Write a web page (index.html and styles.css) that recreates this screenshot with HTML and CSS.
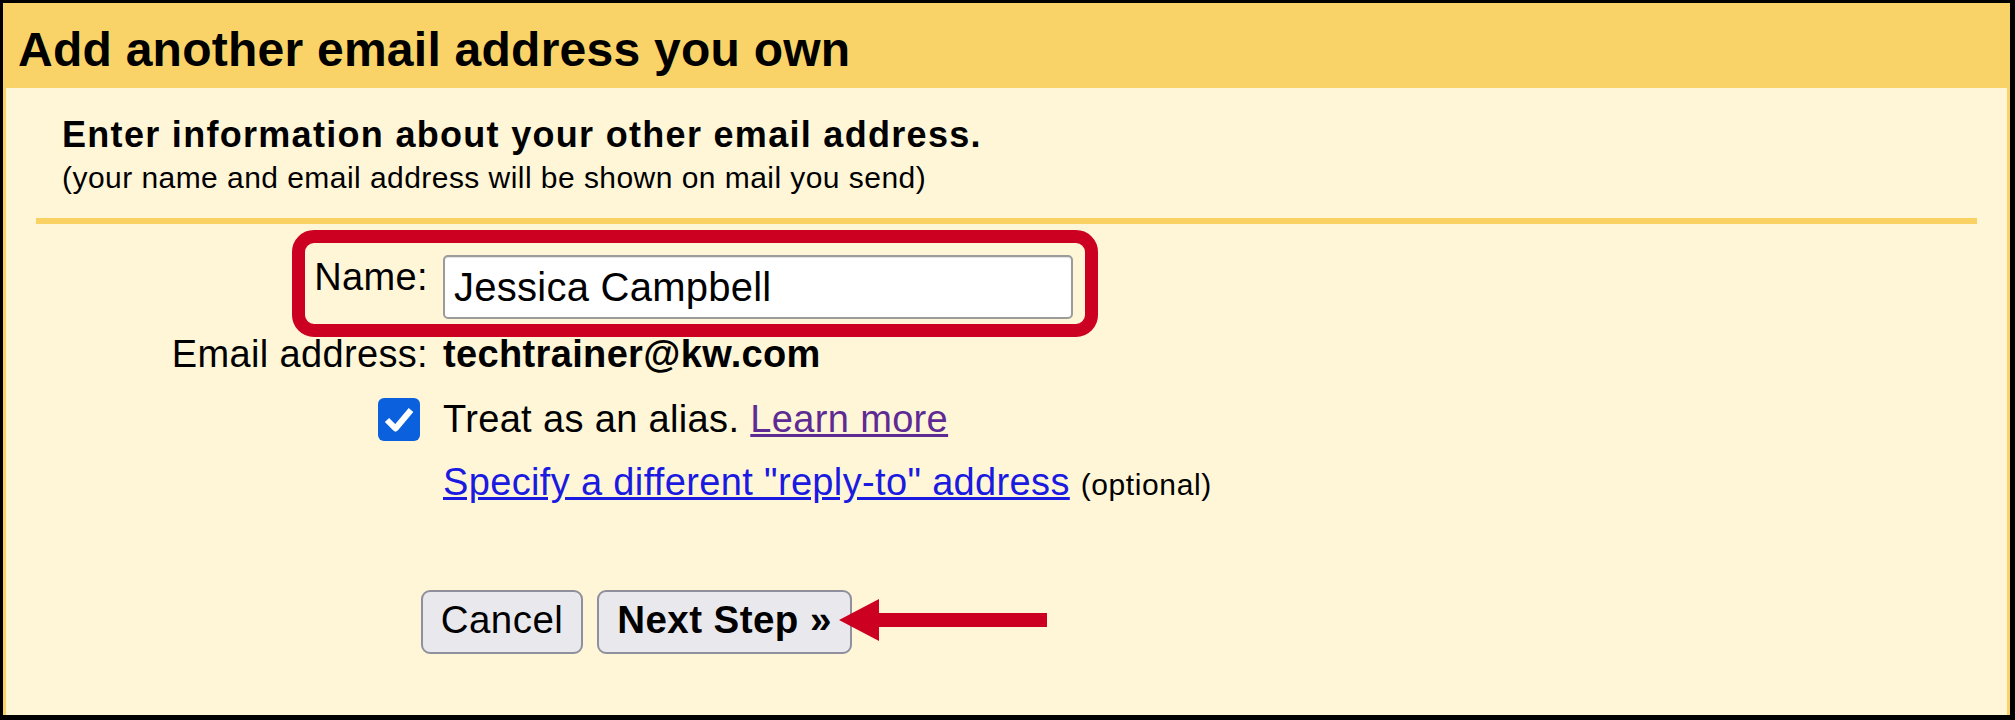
FILE: index.html
```html
<!DOCTYPE html>
<html lang="en">
<head>
<meta charset="utf-8">
<title>Add another email address you own</title>
<link rel="stylesheet" href="styles.css">
</head>
<body>
<div class="dialog">
  <div class="header">
    <h1 class="title">Add another email address you own</h1>
  </div>
  <div class="content">
    <h2 class="subtitle">Enter information about your other email address.</h2>
    <p class="note">(your name and email address will be shown on mail you send)</p>
    <div class="divider"></div>

    <div class="row row-name">
      <label class="label" for="name">Name:</label>
      <div class="value"><input id="name" class="text-input" type="text" value="Jessica Campbell"></div>
    </div>
    <div class="row row-email">
      <span class="label">Email address:</span>
      <span class="value strong">techtrainer@kw.com</span>
    </div>
    <div class="row row-alias">
      <span class="label"><span class="checkbox"><svg viewBox="0 0 42 43" width="42" height="43"><polyline points="9,22 17.5,30.5 33,12" fill="none" stroke="#fff" stroke-width="6" stroke-linejoin="round"/></svg></span></span>
      <span class="value">Treat as an alias. <a class="visited" href="#">Learn more</a></span>
    </div>
    <div class="row row-reply">
      <span class="label"></span>
      <span class="value"><a class="link" href="#">Specify a different "reply-to" address</a> <span class="optional">(optional)</span></span>
    </div>
    <div class="buttons">
      <button class="btn" type="button">Cancel</button>
      <button class="btn btn-primary" type="button">Next Step »</button>
    </div>
  </div>

  <div class="highlight"></div>
  <svg class="arrow" viewBox="0 0 208 42" width="208" height="42"><polygon points="0,21 40,0 40,14 208,14 208,28 40,28 40,42" fill="#cc0020"/></svg>
</div>
</body>
</html>
```

FILE: styles.css
```css
html, body {
  margin: 0;
  padding: 0;
  background: #ffffff;
}
body {
  font-family: "Liberation Sans", Arial, sans-serif;
  color: #000;
}
.dialog {
  position: relative;
  box-sizing: border-box;
  width: 2015px;
  height: 720px;
  border-style: solid;
  border-color: #000;
  border-width: 3px 5px 5px 3px;
  background: #f9d367;
  display: flex;
  flex-direction: column;
}
.header {
  box-sizing: border-box;
  height: 85px;
  padding: 20px 0 0 15px;
}
.title {
  margin: 0;
  font-size: 48px;
  line-height: 54px;
  font-weight: bold;
  letter-spacing: 0.25px;
}
.content {
  flex: 1;
  margin: 0 3px;
  background: #fff6d8;
  padding-top: 27px;
}
.subtitle {
  margin: 0 0 0 56px;
  font-size: 36px;
  line-height: 40px;
  font-weight: bold;
  letter-spacing: 1.3px;
}
.note {
  margin: 6px 0 0 56px;
  font-size: 30px;
  line-height: 34px;
  letter-spacing: 0.45px;
}
.divider {
  margin: 23px 30px 0 30px;
  height: 6px;
  background: #fad264;
}
.row {
  display: flex;
  align-items: flex-start;
  font-size: 38px;
  line-height: 44px;
  letter-spacing: 0.35px;
}
.label {
  flex: 0 0 422px;
  text-align: right;
  margin-right: 15px;
  display: flex;
  justify-content: flex-end;
}
.value {
  flex: 0 0 auto;
}
.strong {
  font-weight: bold;
}
.row-name {
  margin-top: 31px;
}
.row-email {
  margin-top: 13px;
}
.row-alias {
  margin-top: 21px;
}
.row-reply {
  margin-top: 19px;
}
.text-input {
  box-sizing: border-box;
  width: 630px;
  height: 64px;
  margin: 0;
  padding: 0 9px;
  border: 2px solid #9b9b9b;
  border-radius: 5px;
  background: #fff;
  font-family: "Liberation Sans", Arial, sans-serif;
  font-size: 40px;
  letter-spacing: 0.25px;
  color: #000;
  box-shadow: inset 0 1px 1px rgba(0,0,0,0.12);
}
.checkbox {
  display: block;
  width: 42px;
  height: 43px;
  margin-top: 1px;
  margin-right: 8px;
  border-radius: 6px;
  background: #0a60dd;
}
.checkbox svg {
  display: block;
}
.visited {
  color: #5e2a94;
  text-decoration: underline;
}
.link {
  color: #1a1ae0;
  text-decoration: underline;
}
.optional {
  font-size: 30px;
  letter-spacing: 0.6px;
}
.buttons {
  margin-top: 83px;
  padding-left: 415px;
  display: flex;
  gap: 14px;
}
.btn {
  box-sizing: border-box;
  height: 64px;
  margin: 0;
  padding: 0 0 4px 0;
  border: 2px solid #8f8f9d;
  border-radius: 9px;
  background: #e9e9ed;
  font-family: "Liberation Sans", Arial, sans-serif;
  font-size: 38.5px;
  letter-spacing: 0.45px;
  color: #000;
}
.btn:first-child {
  width: 162px;
}
.btn-primary {
  width: 255px;
  font-weight: bold;
}
.highlight {
  position: absolute;
  left: 289px;
  top: 227px;
  width: 806px;
  height: 107px;
  box-sizing: border-box;
  border: 13px solid #cc0020;
  border-radius: 22px;
}
.arrow {
  position: absolute;
  left: 836px;
  top: 596px;
}
```
